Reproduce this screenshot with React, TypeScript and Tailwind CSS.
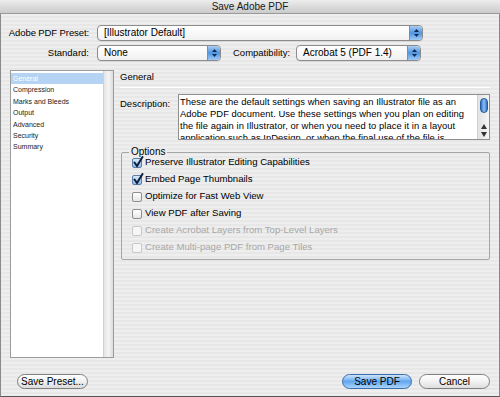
import React from "react";

const font = { fontFamily: '"Liberation Sans", Arial, sans-serif' };

function Stepper() {
  return (
    <div className="w-[13px] h-[14px] rounded-r-[4px] bg-gradient-to-b from-[#a9cdf2] via-[#4f95e0] to-[#9ccaf5] flex items-center justify-center border-l border-[#6d8fb8]">
      <svg width="7" height="10" viewBox="0 0 7 10">
        <path d="M3.5 1 L6 4 L1 4 Z" fill="#0d2a55" />
        <path d="M3.5 9 L6 6 L1 6 Z" fill="#0d2a55" />
      </svg>
    </div>
  );
}

function Select({ text, w }: { text: string; w: string }) {
  return (
    <div className={`${w} h-[16px] flex items-stretch rounded-[4px] border border-[#8c8c8c] bg-gradient-to-b from-white to-[#f1f1f1] shadow-[0_1px_0_#d8d8d8]`}>
      <div className="flex-1 pl-[6px] text-[10px] leading-[14px] text-black truncate">{text}</div>
      <Stepper />
    </div>
  );
}

function Check({ checked, disabled, label }: { checked?: boolean; disabled?: boolean; label: string }) {
  return (
    <div className="flex items-center h-[17px]">
      <div
        className={`relative w-[10px] h-[10px] rounded-[2px] border ${
          disabled ? "border-[#c8c8c8] bg-[#f6f6f6]" : checked ? "border-[#5a7ea8] bg-gradient-to-b from-[#d8e9fb] to-[#8fbbea]" : "border-[#8e8e8e] bg-gradient-to-b from-white to-[#e6e6e6]"
        }`}
      >
        {checked && (
          <svg className="absolute left-[0px] top-[-3px]" width="11" height="12" viewBox="0 0 11 12">
            <path d="M1.5 6.5 L4 10 L9.5 1" stroke="#0e1e3a" strokeWidth="2" fill="none" strokeLinecap="round" />
          </svg>
        )}
      </div>
      <span className={`ml-[3px] text-[9.6px] whitespace-nowrap ${disabled ? "text-[#a8a8a8]" : "text-black"}`}>{label}</span>
    </div>
  );
}

export default function App() {
  const items = ["General", "Compression", "Marks and Bleeds", "Output", "Advanced", "Security", "Summary"];
  return (
    <div style={font} className="w-[500px] h-[397px] flex flex-col overflow-hidden bg-[#ececec]">
      <div className="h-[14px] shrink-0 bg-gradient-to-b from-[#ededed] to-[#cbcbcb] border-b border-[#9a9a9a] flex items-center justify-center text-[10px] text-[#1a1a1a]">
        Save Adobe PDF
      </div>
      <div className="flex-1 flex flex-col border-x border-b border-[#8a8a8a] border-b-[#555] bg-[repeating-linear-gradient(180deg,#eeeeee_0px,#eeeeee_2px,#e7e7e7_2px,#e7e7e7_4px)]">
        <div className="flex items-center mt-[11px] h-[16px]">
          <div className="w-[88px] text-[9.5px] tracking-[-0.1px] text-black text-right whitespace-nowrap">Adobe PDF Preset:</div>
          <div className="ml-[8px]"><Select text="[Illustrator Default]" w="w-[326px]" /></div>
        </div>
        <div className="flex items-center mt-[4px] h-[16px]">
          <div className="w-[88px] text-[9.5px] text-black text-right">Standard:</div>
          <div className="ml-[8px]"><Select text="None" w="w-[124px]" /></div>
          <div className="ml-[12px] text-[9.5px] text-black">Compatibility:</div>
          <div className="ml-[6px]"><Select text="Acrobat 5 (PDF 1.4)" w="w-[125px]" /></div>
        </div>
        <div className="flex mt-[9px] h-[288px]">
          <div className="ml-[9px] w-[104px] flex border border-[#9c9c9c] bg-white">
            <div className="flex-1 pt-[2px]">
              {items.map((it, i) => (
                <div key={it} className={`h-[11.4px] leading-[11px] pl-[2px] text-[7px] ${i === 0 ? "bg-[#b5d3f3] text-white" : "text-[#222]"}`}>{it}</div>
              ))}
            </div>
            <div className="w-[10px] border-l border-[#d0d0d0] bg-gradient-to-r from-[#e4e4e4] via-[#f4f4f4] to-[#dcdcdc]" />
          </div>
          <div className="flex-1 pl-[6px] pr-[9px]">
            <div className="text-[9.5px] text-black leading-[12px] mt-[1px]">General</div>
            <div className="h-px bg-[#9c9c9c] mt-[4px] border-b border-white" />
            <div className="flex mt-[6px]">
              <div className="w-[58px] text-[9.5px] text-black pt-[3px]">Description:</div>
              <div className="flex-1 h-[46px] border border-[#8e8e8e] bg-white flex overflow-hidden">
                <div className="flex-1 pl-[1px] pr-[2px] pt-[1px] text-[9.4px] leading-[12px] text-black tracking-[0.05px]">
                  These are the default settings when saving an Illustrator file as an Adobe PDF document. Use these settings when you plan on editing the file again in Illustrator, or when you need to place it in a layout application such as InDesign, or when the final use of the file is unknown.
                </div>
                <div className="w-[12px] border-l border-[#cfcfcf] bg-gradient-to-r from-[#e2e2e2] to-[#f6f6f6] flex flex-col items-center">
                  <div className="mt-[3px] w-[8px] h-[15px] rounded-full bg-gradient-to-r from-[#2e6fc4] via-[#8ec0f2] to-[#2f70c5] border border-[#245a9e]" />
                  <div className="flex-1" />
                  <svg width="6" height="5" viewBox="0 0 6 5" className="mb-[3px]"><path d="M3 0 L6 5 L0 5 Z" fill="#333" /></svg>
                  <svg width="6" height="5" viewBox="0 0 6 5" className="mb-[2px]"><path d="M3 5 L6 0 L0 0 Z" fill="#333" /></svg>
                </div>
              </div>
            </div>
            <div className="relative mt-[12px] ml-[1px] h-[108px] border border-[#a6a6a6] rounded-[2px]">
              <div className="absolute left-[7px] top-[-7px] px-[2px] text-[10px] leading-[12px] text-black bg-[#ececec]">Options</div>
              <div className="pl-[10px] pt-[1px]">
                <Check checked label="Preserve Illustrator Editing Capabilities" />
                <Check checked label="Embed Page Thumbnails" />
                <Check label="Optimize for Fast Web View" />
                <Check label="View PDF after Saving" />
                <Check disabled label="Create Acrobat Layers from Top-Level Layers" />
                <Check disabled label="Create Multi-page PDF from Page Tiles" />
              </div>
            </div>
          </div>
        </div>
        <div className="flex items-center mt-[16px] h-[15px]">
          <div className="ml-[16px] w-[71px] h-[15px] rounded-full border border-[#7f7f7f] bg-gradient-to-b from-white via-[#f0f0f0] to-[#dcdcdc] text-[10px] leading-[13px] text-black flex items-center justify-center">Save Preset...</div>
          <div className="flex-1" />
          <div className="w-[70px] h-[15px] rounded-full border border-[#3a6ea8] bg-gradient-to-b from-[#cfe5fb] via-[#62a6ee] to-[#aad4fb] text-[10px] text-black flex items-center justify-center">Save PDF</div>
          <div className="ml-[7px] mr-[9px] w-[71px] h-[15px] rounded-full border border-[#7f7f7f] bg-gradient-to-b from-white via-[#f2f2f2] to-[#dedede] text-[10px] text-black flex items-center justify-center">Cancel</div>
        </div>
      </div>
    </div>
  );
}
